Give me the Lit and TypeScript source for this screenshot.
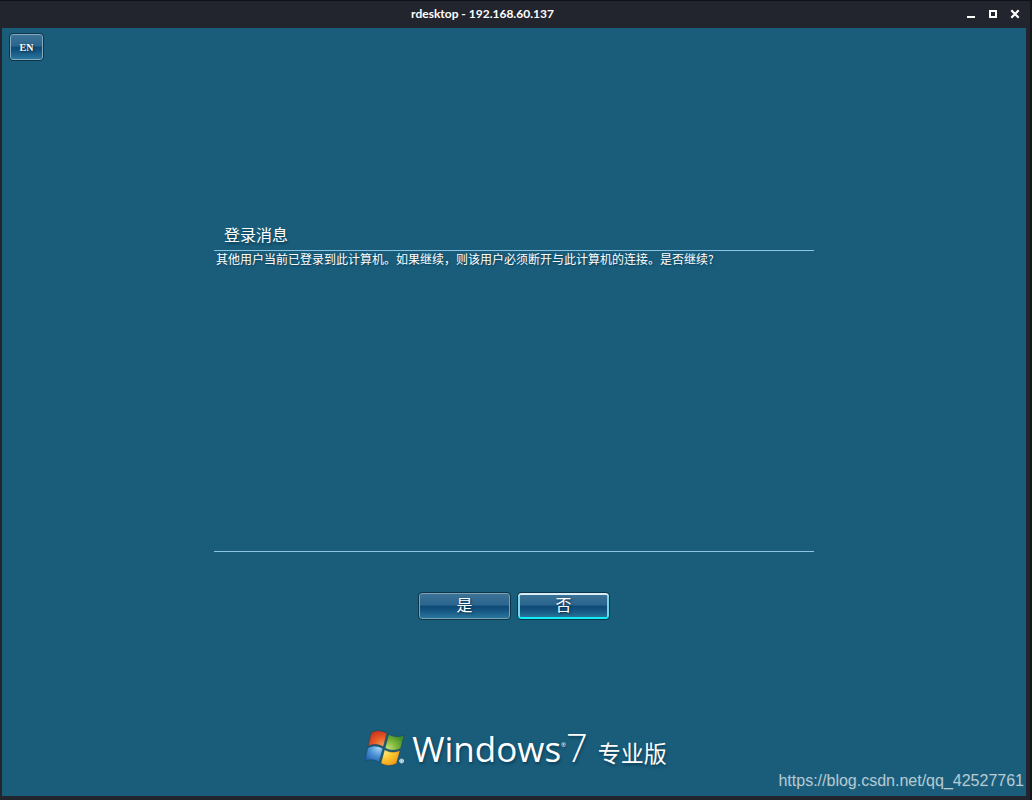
import { LitElement, html, css } from "lit";
import { customElement, property } from "lit/decorators.js";

/** Glossy Windows 7 style push button. */
@customElement("aero-button")
class AeroButton extends LitElement {
  @property({ type: String }) kind = "normal";

  static styles = css`
    :host {
      display: inline-flex;
    }
    button {
      flex: 1;
      box-sizing: border-box;
      height: 28px;
      padding: 0 0 4px;
      border: 1px solid #0d3449;
      border-radius: 4px;
      color: #fff;
      font: 16px "Noto Sans CJK SC", sans-serif;
      line-height: 22px;
      text-shadow: 1px 1px 2px #062c44;
      background: linear-gradient(#3e7497 0%, #2a648d 47%, #0e4977 50%, #155480 66%, #2a7ba0 100%);
      box-shadow: inset 0 0 0 1px #7ba3b8;
      outline: none;
    }
    .focused {
      box-shadow: inset 0 -2px 0 #12eefb, inset 0 2px 0 #d8eef6, inset 2px 0 0 #78d5e8,
        inset -2px 0 0 #78d5e8;
    }
    .language {
      padding: 0;
      font: bold 10px "Liberation Serif", serif;
      box-shadow: inset 0 0 0 1px #86abc0;
    }
  `;

  render() {
    return html`<button type="button" class=${this.kind}><slot></slot></button>`;
  }
}

@customElement("app-root")
class AppRoot extends LitElement {
  static styles = css`
    :host {
      display: flex;
      flex-direction: column;
      box-sizing: border-box;
      height: 100vh;
      background: #23252e;
      border-top: 1px solid #101116;
      border-right: 2px solid #14161c;
      color: #fff;
      font-family: "Noto Sans CJK SC", sans-serif;
    }
    .titlebar {
      display: grid;
      grid-template-columns: 1fr auto 1fr;
      align-items: center;
      box-sizing: border-box;
      height: 27px;
      padding: 0 7px 2px 2px;
    }
    .title {
      grid-column: 2;
      margin: 0;
      padding-right: 60px;
      font: bold 12px "Lato", sans-serif;
    }
    .controls {
      grid-column: 3;
      display: flex;
      justify-content: flex-end;
      gap: 6px;
    }
    .controls button {
      display: flex;
      width: 16px;
      height: 16px;
      padding: 3px;
      border: 0;
      background: none;
      color: #fff;
    }
    .screen {
      position: relative;
      flex: 1;
      display: flex;
      flex-direction: column;
      align-items: center;
      margin: 0 4px 4px 2px;
      background: #195d7b;
    }
    .toolbar {
      display: flex;
      align-self: stretch;
      padding: 5px 7px;
    }
    .toolbar aero-button {
      width: 35px;
    }
    .dialog {
      display: flex;
      flex-direction: column;
      align-items: center;
      width: 600px;
      max-width: 100%;
      margin-top: 156px;
    }
    .heading {
      align-self: stretch;
      margin: 0;
      padding: 0 10px 4px;
      border-bottom: 1px solid #8cc4e4;
      font-size: 16px;
      font-weight: 400;
      line-height: 24px;
      text-shadow: 1px 2px 2px #0c3e57;
    }
    .message {
      align-self: stretch;
      box-sizing: border-box;
      min-height: 301px;
      margin: 0;
      padding: 0 2px;
      border-bottom: 1px solid #8cc4e4;
      font-size: 12px;
      line-height: 16px;
      text-shadow: 1px 1px 2px #0c3e57;
    }
    .actions {
      display: flex;
      gap: 6px;
      margin-top: 40px;
    }
    .actions aero-button {
      width: 93px;
    }
    .brand {
      display: flex;
      align-items: baseline;
      margin-top: auto;
      margin-bottom: 20px;
      padding-left: 4px;
      line-height: 48px;
      text-shadow: 1px 2px 3px #0c3e57;
    }
    .flag {
      width: 40px;
      height: 36px;
      margin-right: 7px;
      margin-bottom: 4px;
      align-self: center;
    }
    .wordmark {
      font-family: "Open Sans", sans-serif;
      font-size: 35px;
    }
    .registered {
      align-self: center;
      margin-bottom: 10px;
      font-family: "Open Sans", sans-serif;
      font-size: 6px;
      line-height: 12px;
    }
    .version {
      font-family: "Open Sans", sans-serif;
      font-size: 38px;
      font-weight: 300;
    }
    .edition {
      margin-left: 10px;
      font-size: 23px;
    }
    .watermark {
      position: absolute;
      right: 2px;
      bottom: 6px;
      color: #b3cbd6;
      font: 16px "Liberation Sans", sans-serif;
      text-shadow: 1px 1px 1px #31647b;
    }
  `;

  render() {
    return html`
      <header class="titlebar">
        <h1 class="title">rdesktop - 192.168.60.137</h1>
        <div class="controls">
          <button type="button" aria-label="Minimize">
            <svg width="10" height="10" viewBox="0 0 10 10"><path d="M1 7h8v2H1z" fill="currentColor" /></svg>
          </button>
          <button type="button" aria-label="Maximize">
            <svg width="10" height="10" viewBox="0 0 10 10">
              <path d="M2 2h6v6H2z" fill="none" stroke="currentColor" stroke-width="2" />
            </svg>
          </button>
          <button type="button" aria-label="Close">
            <svg width="10" height="10" viewBox="0 0 10 10">
              <path d="M1.300 1.300l7.400 7.400M8.700 1.300l-7.400 7.400" stroke="currentColor" stroke-width="2.200" />
            </svg>
          </button>
        </div>
      </header>
      <main class="screen">
        <div class="toolbar"><aero-button kind="language">EN</aero-button></div>
        <section class="dialog">
          <h2 class="heading">登录消息</h2>
          <p class="message">其他用户当前已登录到此计算机。如果继续，则该用户必须断开与此计算机的连接。是否继续?</p>
          <div class="actions">
            <aero-button>是</aero-button>
            <aero-button kind="focused">否</aero-button>
          </div>
        </section>
        <footer class="brand">
          <svg class="flag" viewBox="0 0 40 36" aria-hidden="true">
            <defs>
              <radialGradient id="red" cx="0.8" cy="0.9" r="1">
                <stop offset="0" stop-color="#f9a05a" /><stop offset="0.5" stop-color="#e85a24" /><stop offset="1" stop-color="#c5301c" />
              </radialGradient>
              <radialGradient id="green" cx="0.1" cy="0.9" r="1">
                <stop offset="0" stop-color="#c6e27a" /><stop offset="0.5" stop-color="#7fb83b" /><stop offset="1" stop-color="#3f8a2c" />
              </radialGradient>
              <radialGradient id="blue" cx="0.8" cy="0.1" r="1">
                <stop offset="0" stop-color="#a9d8f5" /><stop offset="0.5" stop-color="#4d94d6" /><stop offset="1" stop-color="#1f5cae" />
              </radialGradient>
              <radialGradient id="yellow" cx="0.1" cy="0.1" r="1">
                <stop offset="0" stop-color="#ffee9a" /><stop offset="0.5" stop-color="#fdc92f" /><stop offset="1" stop-color="#f09a1c" />
              </radialGradient>
            </defs>
            <g stroke="#18445d" stroke-width="0.6">
              <path d="M6.200 2.500C11 -0.200 16.500 0.200 22 3.300L18.300 17C13.500 14 8.500 13.800 3 16.200Z" fill="url(#red)" />
              <path d="M23.600 4.200C29 7 34 7.300 39.300 4.900L35.700 18.500C30 21.200 25 20.900 20 18Z" fill="url(#green)" />
              <path d="M2.700 17.800C8 15.300 13 15.400 17.900 18.600L14.200 32.400C9.500 29.300 4.700 29 -0.600 31.500Z" fill="url(#blue)" />
              <path d="M19.500 19.600C24.300 22.400 29.500 22.800 35.200 20.200L31.600 33.500C26.500 36.300 21 36.100 15.800 33.200Z" fill="url(#yellow)" />
            </g>
            <circle cx="36.600" cy="31" r="2" fill="#8fb4c6" stroke="#d8e8ef" stroke-width="0.800" />
            <circle cx="36.600" cy="31" r="0.700" fill="#fff" />
          </svg>
          <span class="wordmark">Windows</span><span class="registered">®</span><span class="version">7</span>
          <span class="edition">专业版</span>
        </footer>
        <span class="watermark">https://blog.csdn.net/qq_42527761</span>
      </main>
    `;
  }
}
